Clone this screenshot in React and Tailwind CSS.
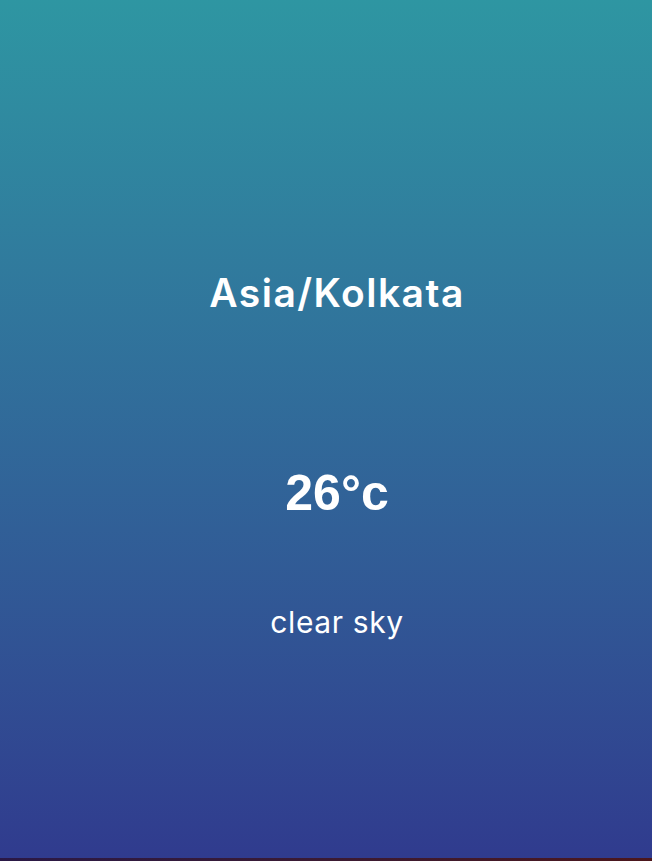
export default function App() {
  return (
    <div className="w-[652px] h-[861px] overflow-hidden bg-gradient-to-r from-[#2a1846] to-[#4c161c]">
      <div className="h-[858px] w-full bg-gradient-to-b from-[#2e96a2] to-[#303b8e] flex flex-col items-center pl-[22px] text-white">
        <h1 className="mt-[268px] text-[39px] leading-[50px] font-semibold font-['Inter',sans-serif] tracking-[1.5px]">Asia/Kolkata</h1>
        <div className="mt-[146px] text-[50px] leading-[58px] font-bold font-['Liberation_Sans',Arial,sans-serif]">26°c</div>
        <div className="mt-[82px] text-[30px] leading-[36px] font-normal font-['Inter',sans-serif] tracking-[0.6px]">clear sky</div>
      </div>
    </div>
  );
}
